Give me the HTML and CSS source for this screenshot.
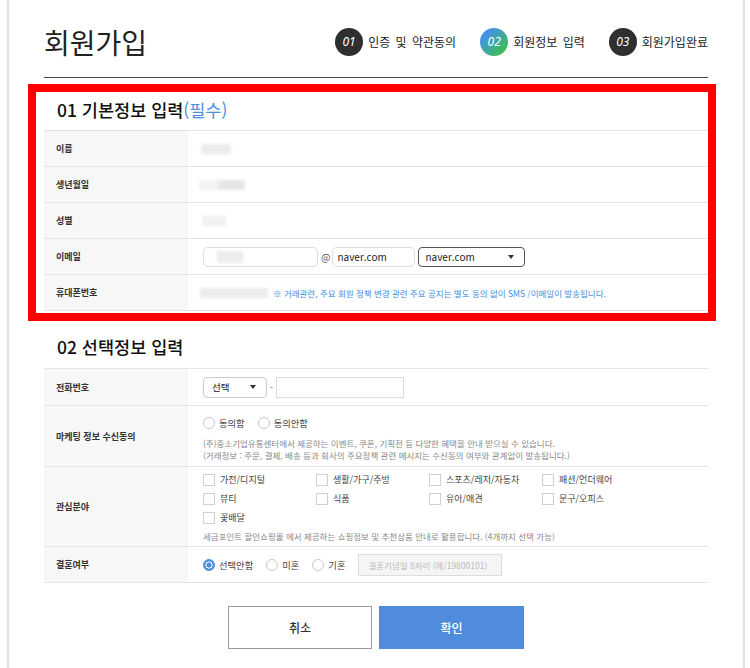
FILE: index.html
```html
<!DOCTYPE html>
<html lang="ko">
<head>
  <meta charset="UTF-8" />
  <meta name="viewport" content="width=device-width, initial-scale=1.0"/>
  <title>회원가입 - 회원정보 입력</title>
  <link rel="stylesheet" href="styles.css">
</head>
<body>
  <div class="wrap">
    <div class="head">
      <h1 class="title">회원가입</h1>
      <ol class="steps">
        <li><span class="num">01</span>인증 및 약관동의</li>
        <li><span class="num num-on">02</span>회원정보 입력</li>
        <li><span class="num">03</span>회원가입완료</li>
      </ol>
    </div>

    <!-- 필수 정보 -->
    <div class="section section-required">
      <h2 class="sec-title">01 기본정보 입력<span class="must">(필수)</span></h2>
      <div class="form-table">
        <div class="row">
          <div class="th">이름</div>
          <div class="td"><span class="mask mask-name"></span></div>
        </div>
        <div class="row">
          <div class="th">생년월일</div>
          <div class="td"><span class="mask mask-birth"></span></div>
        </div>
        <div class="row">
          <div class="th">성별</div>
          <div class="td"><span class="mask mask-gender"></span></div>
        </div>
        <div class="row">
          <div class="th">이메일</div>
          <div class="td">
            <span class="inp inp-round inp-id"><span class="mask mask-mail"></span></span>
            <span class="at">@</span>
            <span class="inp inp-round inp-domain">naver.com</span>
            <span class="sel sel-dark sel-domain">naver.com<i class="arrow"></i></span>
          </div>
        </div>
        <div class="row">
          <div class="th">휴대폰번호</div>
          <div class="td">
            <span class="mask mask-phone"></span>
            <span class="notice">※ 거래관련, 주요 회원 정책 변경 관련 주요 공지는 별도 동의 없이 SMS /이메일이 발송됩니다.</span>
          </div>
        </div>
      </div>
    </div>

    <!-- 선택 정보 -->
    <div class="section section-option">
      <h2 class="sec-title">02 선택정보 입력</h2>
      <div class="form-table">
        <div class="row row-tel">
          <div class="th">전화번호</div>
          <div class="td">
            <span class="sel sel-tel">선택<i class="arrow"></i></span>
            <span class="dash">-</span>
            <span class="inp inp-tel"></span>
          </div>
        </div>
        <div class="row">
          <div class="th">마케팅 정보 수신동의</div>
          <div class="td td-block td-agree">
            <div class="opts">
              <label class="opt"><span class="radio"></span>동의함</label>
              <label class="opt"><span class="radio"></span>동의안함</label>
            </div>
            <p class="desc">(주)중소기업유통센터에서 제공하는 이벤트, 쿠폰, 기획전 등 다양한 혜택을 안내 받으실 수 있습니다.<br>(거래정보 : 주문, 결제, 배송 등과 회사의 주요정책 관련 메시지는 수신동의 여부와 관계없이 발송됩니다.)</p>
          </div>
        </div>
        <div class="row">
          <div class="th">관심분야</div>
          <div class="td td-block td-interest">
            <div class="checks">
              <label class="chk"><span class="box"></span>가전/디지털</label>
              <label class="chk"><span class="box"></span>생활/가구/주방</label>
              <label class="chk"><span class="box"></span>스포츠/레저/자동차</label>
              <label class="chk"><span class="box"></span>패션/언더웨어</label>
              <label class="chk"><span class="box"></span>뷰티</label>
              <label class="chk"><span class="box"></span>식품</label>
              <label class="chk"><span class="box"></span>유아/애견</label>
              <label class="chk"><span class="box"></span>문구/오피스</label>
              <label class="chk"><span class="box"></span>꽃배달</label>
            </div>
            <p class="desc">세금포인트 할인쇼핑몰 에서 제공하는 쇼핑정보 및 추천상품 안내로 활용합니다. (4개까지 선택 가능)</p>
          </div>
        </div>
        <div class="row">
          <div class="th">결혼여부</div>
          <div class="td">
            <div class="opts">
              <label class="opt"><span class="radio radio-on"></span>선택안함</label>
              <label class="opt"><span class="radio"></span>미혼</label>
              <label class="opt"><span class="radio"></span>기혼</label>
              <span class="inp inp-off">결혼기념일 8자리 (예/19800101)</span>
            </div>
          </div>
        </div>
      </div>
    </div>

    <div class="btns">
      <button class="btn">취소</button>
      <button class="btn btn-ok">확인</button>
    </div>
  </div>
</body>
</html>
```

FILE: styles.css
```css
* {
  box-sizing: border-box;
}

body {
  margin: 0;
  background: #fff;
  font-family: "Noto Sans CJK KR", "Noto Sans", sans-serif;
  color: #222;
}

.wrap {
  width: 738px;
  min-height: 668px;
  margin-left: 7px;
  padding: 0 35px 30px;
  border-left: 2px solid #e2e2e2;
  border-right: 2px solid #e2e2e2;
}

/* 상단 타이틀 + 단계 */
.head {
  display: flex;
  justify-content: space-between;
  align-items: center;
  height: 78px;
  padding-top: 6px;
  border-bottom: 1px solid #444;
}

.title {
  margin: 0;
  font-size: 28px;
  font-weight: 400;
  line-height: 1;
}

.steps {
  display: flex;
  gap: 24px;
  margin: 0;
  padding: 0;
  list-style: none;
  font-size: 12px;
  word-spacing: 2px;
  color: #222;
}

.steps li {
  display: flex;
  align-items: center;
  gap: 5px;
}

.num {
  display: flex;
  justify-content: center;
  align-items: center;
  width: 28px;
  height: 28px;
  border-radius: 50%;
  background: #2f2f2f;
  color: #fff;
  font: italic 12px "Noto Sans", sans-serif;
}

.num-on {
  background: linear-gradient(135deg, #4590ea 20%, #3bbf55 85%);
}

/* 섹션 */
.section {
  position: relative;
  display: flow-root;
}

.section-required::after {
  content: "";
  position: absolute;
  top: 6px;
  left: -16px;
  right: -8px;
  bottom: -10px;
  border: 8px solid #f00;
  pointer-events: none;
}

.sec-title {
  margin: 20px 0 8px 13px;
  font-size: 17.5px;
  font-weight: 500;
  line-height: 24px;
  color: #111;
}

.section-option .sec-title {
  margin-top: 24px;
  margin-bottom: 9px;
}

.must {
  color: #4a8fe0;
  font-weight: 400;
}

.form-table {
  border-top: 1px solid #e4e4e4;
}

.row {
  display: flex;
  min-height: 36px;
  border-bottom: 1px solid #e4e4e4;
}

.row-tel {
  min-height: 37px;
}

.th {
  display: flex;
  align-items: center;
  flex: none;
  width: 144px;
  padding-left: 12px;
  background: #f7f7f7;
  font-size: 9px;
  font-weight: 700;
  color: #333;
}

.td {
  display: flex;
  align-items: center;
  flex: 1;
  padding: 0 15px;
  font-size: 9px;
  color: #333;
}

.td-block {
  display: block;
}

.td-agree {
  padding-top: 9px;
  padding-bottom: 5px;
}

.td-interest {
  padding-top: 3px;
  padding-bottom: 4px;
}

/* 가려진 개인정보 */
.mask {
  display: inline-block;
  height: 10px;
  background: #ececec;
  filter: blur(1.5px);
}

.mask-name { width: 30px; margin-left: -2px; }
.mask-birth { width: 46px; margin-left: -4px; background: linear-gradient(90deg, #f3f3f3 40%, #e6e6e6 45%); }
.mask-gender { width: 24px; margin-left: -1px; background: #f1f1f1; }
.mask-mail { width: 26px; height: 12px; margin-left: 13px; }
.mask-phone { width: 68px; margin-left: -3px; }

/* 입력 요소 */
.inp {
  display: inline-flex;
  align-items: center;
  height: 21px;
  border: 1px solid #dcdcdc;
  background: #fff;
}

.inp-round {
  height: 20px;
  border-radius: 5px;
}

.inp-id { width: 115px; }

.inp-domain {
  width: 83px;
  padding-left: 4px;
  font-size: 10px;
  color: #222;
}

.at {
  margin: 0 2px 0 3px;
  font-size: 10px;
  color: #555;
}

.sel {
  display: inline-flex;
  align-items: center;
  justify-content: space-between;
  height: 21px;
  border: 1px solid #ccc;
  border-radius: 4px;
  background: #fff;
  color: #222;
}

.sel-dark {
  height: 20px;
  margin-left: 3px;
  border-color: #555;
}

.sel-domain {
  width: 107px;
  padding: 0 10px 0 6px;
  font-size: 10px;
}

.sel-tel {
  width: 64px;
  padding: 0 10px 0 8px;
  font-size: 9.5px;
}

.arrow {
  width: 0;
  height: 0;
  border-left: 3px solid transparent;
  border-right: 3px solid transparent;
  border-top: 4px solid #333;
}

.dash {
  margin: 0 3px;
  color: #666;
}

.inp-tel { width: 128px; }

.notice {
  margin-left: 5px;
  font-size: 8.5px;
  color: #3b8de0;
}

.opts {
  display: flex;
  align-items: center;
  gap: 13px;
  height: 16px;
}

.opt {
  display: inline-flex;
  align-items: center;
  gap: 4px;
  font-size: 9.3px;
  color: #444;
}

.radio {
  width: 12px;
  height: 12px;
  border: 1px solid #c8c8c8;
  border-radius: 50%;
  background: #fff;
}

.radio-on {
  border-color: #4a8fe0;
  background: radial-gradient(circle, #4a8fe0 0 2.4px, #fff 2.8px 3.4px, #4a8fe0 3.8px);
}

.inp-off {
  width: 144px;
  height: 22px;
  padding-left: 9px;
  border-color: #ddd;
  background: #f5f5f5;
  font-size: 8.5px;
  color: #bbb;
}

.desc {
  margin: 6px 0 0;
  font-size: 8.5px;
  line-height: 12px;
  color: #888;
}

.td-interest .desc {
  margin-top: 3px;
}

.checks {
  display: grid;
  grid-template-columns: repeat(4, 113px);
  grid-auto-rows: 19px;
}

.chk {
  display: flex;
  align-items: center;
  gap: 5px;
  font-size: 9px;
  color: #444;
}

.box {
  width: 12px;
  height: 12px;
  border: 1px solid #d0d0d0;
  background: #fff;
}

/* 버튼 */
.btns {
  display: flex;
  justify-content: center;
  gap: 7px;
  margin-top: 23px;
}

.btn {
  width: 144px;
  height: 43px;
  border: 1px solid #999;
  background: #fff;
  font-family: inherit;
  font-size: 12px;
  font-weight: 500;
  color: #333;
}

.btn-ok {
  width: 145px;
  border-color: #4f8ddc;
  background: #4f8ddc;
  color: #fff;
}
```
